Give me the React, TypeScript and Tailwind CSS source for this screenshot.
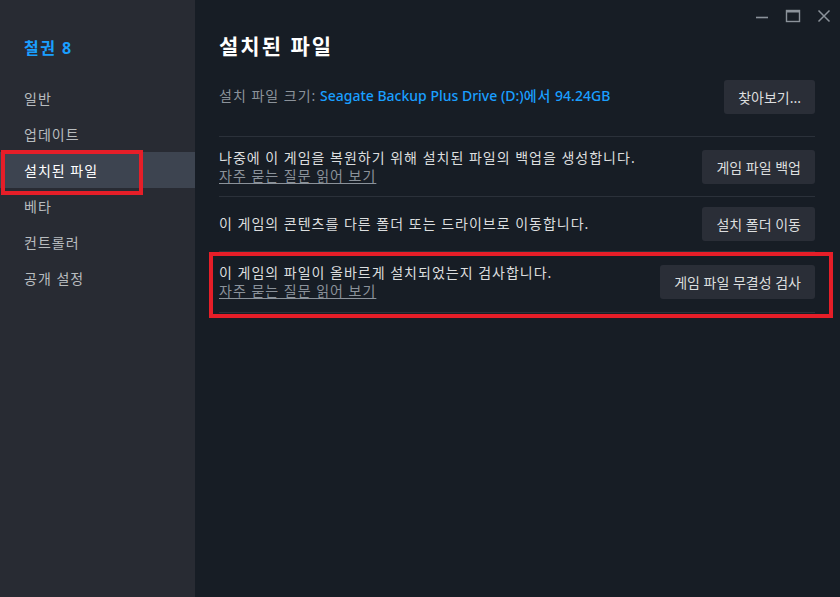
import React from "react";

const font = { fontFamily: '"Noto Sans", "Noto Sans CJK KR", sans-serif' };

const navItems = ["일반", "업데이트", "설치된 파일", "베타", "컨트롤러", "공개 설정"];

const Btn = ({ children }: { children: React.ReactNode }) => (
  <button className="h-[34px] px-[14px] rounded-[3px] bg-[#2a2e37] text-[14px] text-[#dcdedf] whitespace-nowrap">
    {children}
  </button>
);

const FaqLink = () => (
  <a className="text-[14px] leading-[18px] tracking-[1px] text-[#8b929a] underline underline-offset-2 decoration-[#8b929a]">
    자주 묻는 질문 읽어 보기
  </a>
);

export default function App() {
  return (
    <div className="relative flex w-[840px] h-[597px] bg-[#171d25] overflow-hidden" style={font}>
      {/* 사이드바 */}
      <aside className="w-[195px] shrink-0 bg-[#282b33] pt-[36px]">
        <div className="px-6 text-[16px] leading-6 font-bold tracking-[1.5px] text-[#1a9fff]">철권 8</div>
        <nav className="mt-[20px]">
          {navItems.map((item) => (
            <div
              key={item}
              className={
                item === "설치된 파일"
                  ? "h-[36px] flex items-center px-6 text-[14px] tracking-[1px] bg-[#3d4450] text-white"
                  : "h-[36px] flex items-center px-6 text-[14px] tracking-[1px] text-[#b8bcbf]"
              }
            >
              {item}
            </div>
          ))}
        </nav>
      </aside>

      {/* 본문 */}
      <main className="flex-1 pl-6 pr-[25px] pt-[31px]">
        <h1 className="text-[21px] leading-[30px] font-bold tracking-[2px] text-white">설치된 파일</h1>

        <div className="mt-[19px] flex items-center justify-between h-[34px]">
          <p className="text-[14px] leading-[18px] -mt-[3px] text-[#8b929a]">
            <span className="tracking-[1px]">설치 파일 크기:</span>{" "}
            <span className="text-[#1a9fff] font-medium">
              Seagate Backup Plus Drive (D:)<span className="tracking-[1px]">에서</span> 94.24GB
            </span>
          </p>
          <Btn>찾아보기...</Btn>
        </div>

        <div className="mt-[22px] border-t border-[#2b313a]">
          <div className="flex items-center justify-between pt-3 pb-[11px] border-b border-[#2b313a]">
            <div className="flex flex-col">
              <p className="text-[14px] leading-[18px] tracking-[1px] text-[#dcdedf]">
                나중에 이 게임을 복원하기 위해 설치된 파일의 백업을 생성합니다.
              </p>
              <FaqLink />
            </div>
            <Btn>게임 파일 백업</Btn>
          </div>

          <div className="flex items-center justify-between py-[10px] border-b border-[#2b313a]">
            <p className="text-[14px] leading-[18px] tracking-[1px] text-[#dcdedf]">
              이 게임의 콘텐츠를 다른 폴더 또는 드라이브로 이동합니다.
            </p>
            <Btn>설치 폴더 이동</Btn>
          </div>

          <div className="flex items-center justify-between py-3 border-b border-[#2b313a]">
            <div className="flex flex-col">
              <p className="text-[14px] leading-[18px] tracking-[1px] text-[#dcdedf]">
                이 게임의 파일이 올바르게 설치되었는지 검사합니다.
              </p>
              <FaqLink />
            </div>
            <Btn>게임 파일 무결성 검사</Btn>
          </div>
        </div>
      </main>

      {/* 창 컨트롤 */}
      <div className="absolute top-[8px] right-[8px] flex items-center gap-[15px] text-[#8b929a]">
        <svg width="16" height="16" viewBox="0 0 16 16">
          <path d="M2 9.5h12" stroke="currentColor" strokeWidth="1.6" />
        </svg>
        <svg width="16" height="16" viewBox="0 0 16 16">
          <rect x="1.5" y="2.5" width="13" height="11" fill="none" stroke="currentColor" strokeWidth="1.4" />
          <path d="M1.5 3.5h13" stroke="currentColor" strokeWidth="2" />
        </svg>
        <svg width="16" height="16" viewBox="0 0 16 16">
          <path d="M2.5 2.5l11 11M13.5 2.5l-11 11" stroke="currentColor" strokeWidth="1.5" />
        </svg>
      </div>

      {/* 강조 표시 */}
      <div className="absolute left-[1px] top-[150px] w-[142px] h-[45px] border-4 border-[#e61e28]" />
      <div className="absolute left-[209px] top-[252px] w-[624px] h-[66px] border-4 border-[#e61e28]" />
    </div>
  );
}
